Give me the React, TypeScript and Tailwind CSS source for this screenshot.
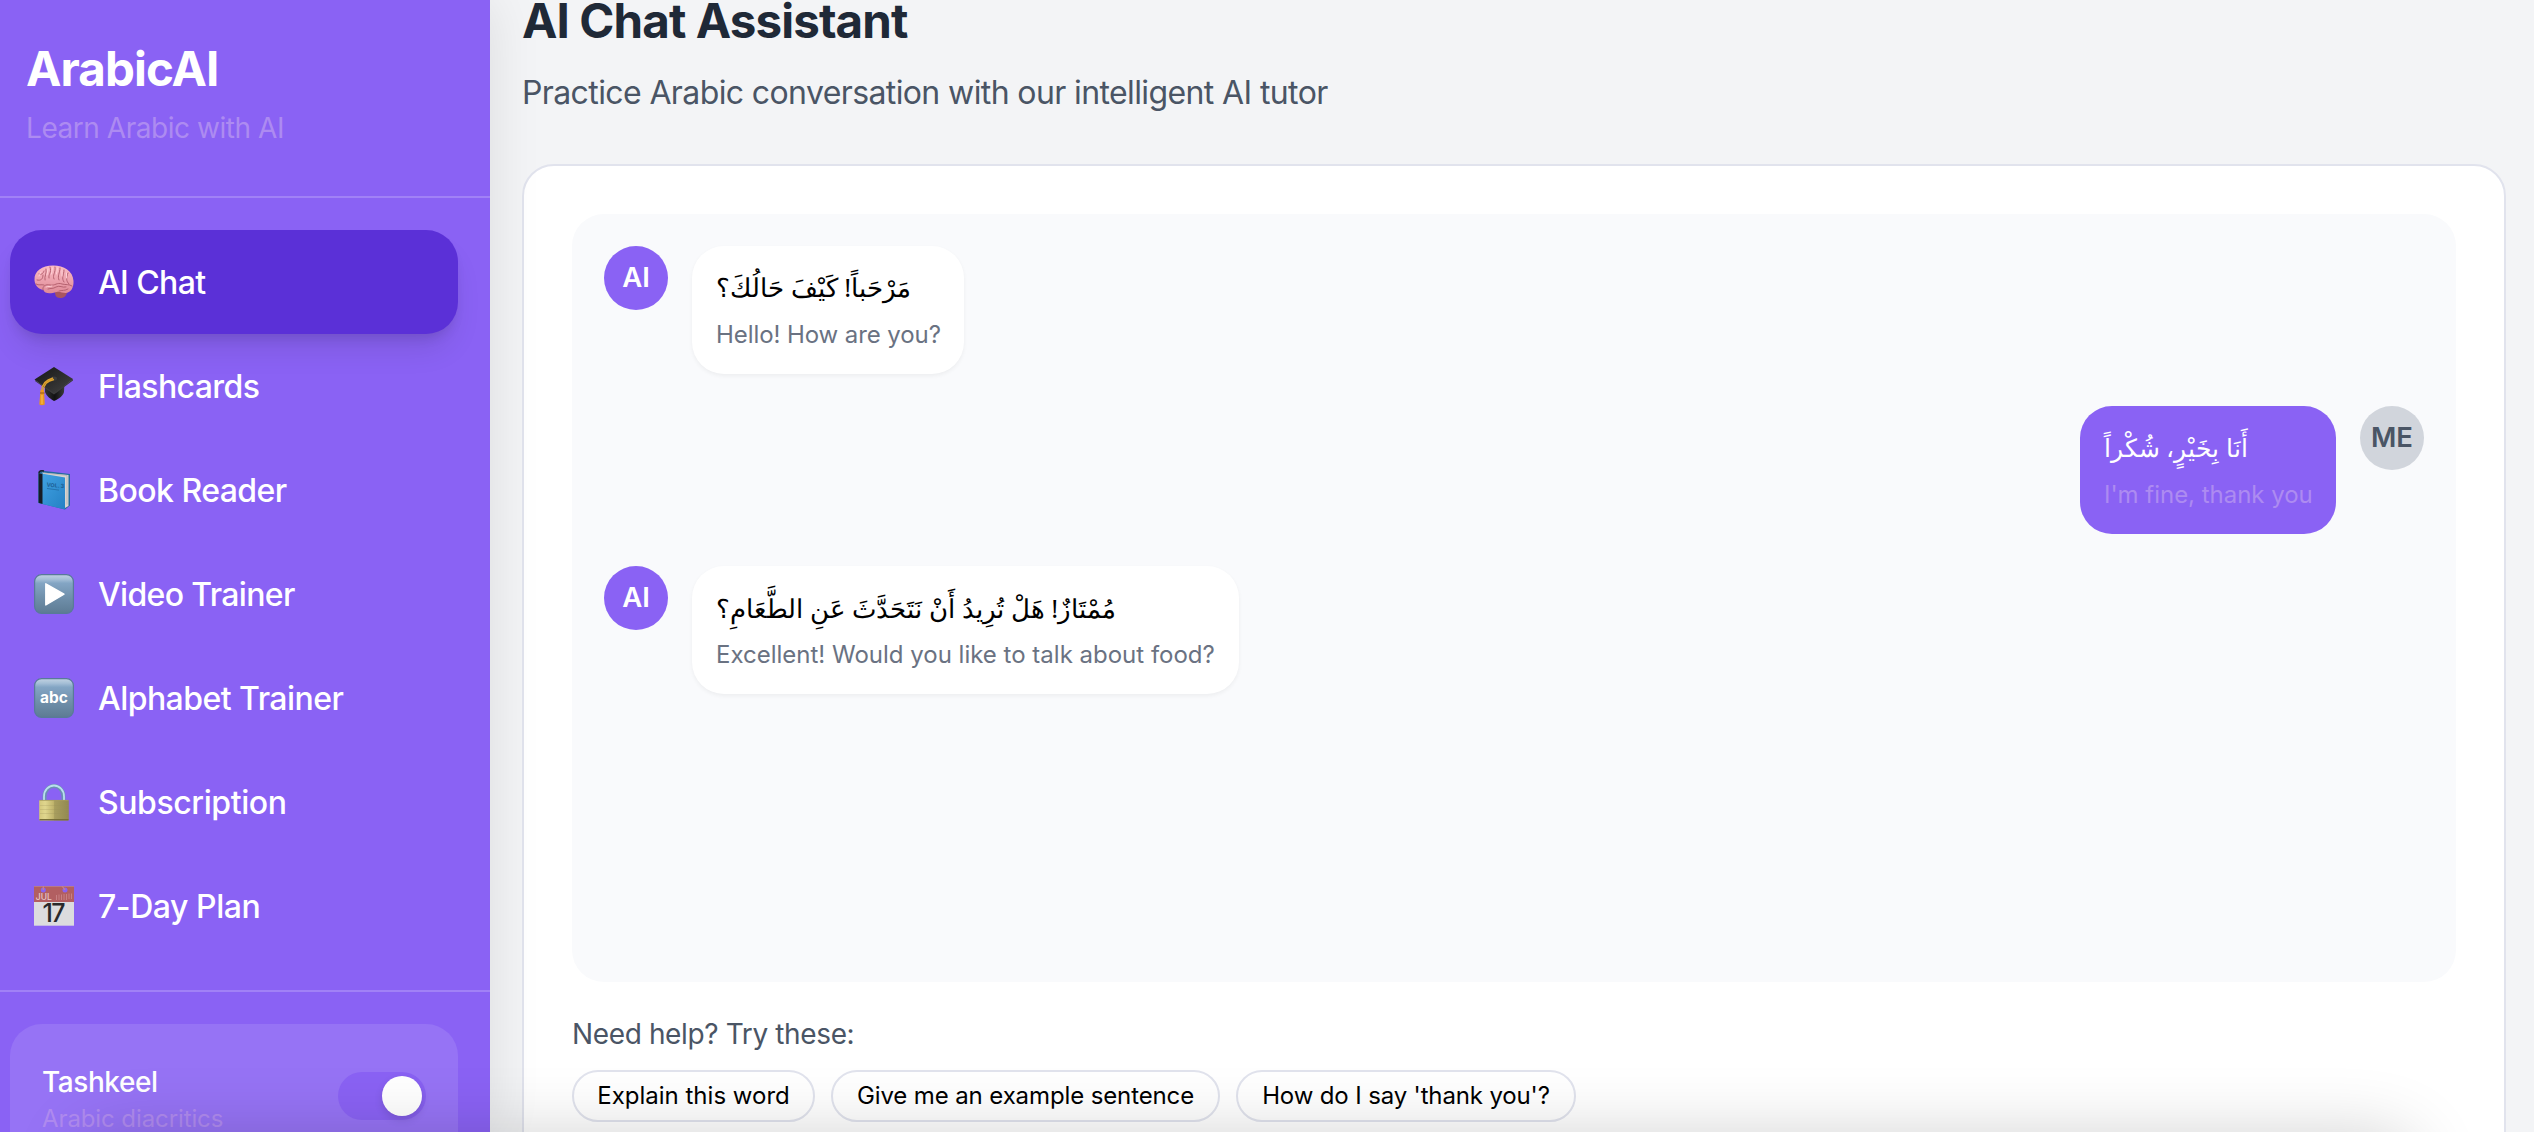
import React from "react";

function BrainIcon() {
  return (
    <svg viewBox="0 0 40 40" className="h-10 w-10 shrink-0">
      <defs>
        <linearGradient id="brain" x1="0" y1="0" x2="0" y2="1">
          <stop offset="0" stopColor="#fbbcc5" />
          <stop offset="1" stopColor="#df8a97" />
        </linearGradient>
      </defs>
      <path d="M21 30c0-3 3-5 8-5s5 3 4 6-3 5-7 5-5-3-5-6z" fill="#a85560" />
      <path d="M0.5 18C0 9 8 3.500 19 3.500c11 0 20 5.500 20.500 15.500 .4 7-3 12-8 12-3 0-6-2-9-1-6 2-12 2-13-2C4 27 .700 23 .500 18z" fill="url(#brain)" />
      <g fill="none" stroke="#b5616f" strokeWidth="1" strokeLinecap="round">
        <path d="M3 18c4 1 6-1 6-5M5 12c2 1 4 0 5-3M11 18c-1-4 2-6 1-11M15 16c-1-4 3-5 1-11M20 17c-2-4 2-6 1-12M25 18c-2-4 1-7 1-12M30 20c-3-4 0-7 0-12M35 22c-3-3-3-6-1-11" />
        <path d="M9 28c-1-4 3-6 7-5 5 1 7-3 12-1 4 1 7 0 10 2M14 27c3-1 5 0 8-2 4-2 6 1 10 0M2 22c3 2 5 0 8 1M25 29c3-1 6 0 9-2" />
      </g>
      <g fill="none" stroke="#ffd3d8" strokeWidth="0.900" strokeLinecap="round">
        <path d="M7 10l-2 4M14 7l-1 6M18.500 6l-1 6M23.500 6l-1 6M28 8v6M32.500 11v5M12 25c2-1 4 0 6-1" />
      </g>
    </svg>
  );
}

function CapIcon() {
  return (
    <svg viewBox="0 0 40 40" className="h-10 w-10 shrink-0">
      <defs>
        <linearGradient id="board" x1="0" y1="0" x2="1" y2="1">
          <stop offset="0" stopColor="#151515" />
          <stop offset="1" stopColor="#444" />
        </linearGradient>
        <linearGradient id="capBase" x1="0" y1="0" x2="1" y2="0">
          <stop offset="0" stopColor="#333" />
          <stop offset="0.500" stopColor="#111" />
          <stop offset="1" stopColor="#3a3a3a" />
        </linearGradient>
      </defs>
      <path d="M11 18v8c2 5 6 7 9 9 5-2 9-5 10-9l.500-10z" fill="url(#capBase)" />
      <path d="M0.500 13.500 20 1l19 12-19 15z" fill="url(#board)" />
      <path d="M1 14l19 13 19-14v1.500L20 28.500 1 15z" fill="#3b3b3b" />
      <ellipse cx="20" cy="12.500" rx="3" ry="2" fill="#3c3c3c" />
      <path d="M19 12C11 14 8 18 7.500 25M20 13.500C13 15 10 18 9 25" fill="none" stroke="#dda12c" strokeWidth="1.300" />
      <path d="M6.500 24h3.500l.800 14.500c-2 1-4 1-5.500 0z" fill="#e9981e" />
      <path d="M6 27h4.500" stroke="#a8651d" strokeWidth="1.300" />
      <path d="M8 29v9" stroke="#ffc65b" strokeWidth="0.900" />
    </svg>
  );
}

function BookIcon() {
  return (
    <svg viewBox="0 0 40 40" className="h-10 w-10 shrink-0">
      <defs>
        <linearGradient id="cover" x1="0" y1="0" x2="1" y2="1">
          <stop offset="0" stopColor="#43a5e5" />
          <stop offset="1" stopColor="#2480c4" />
        </linearGradient>
      </defs>
      <path d="M7 .500 36 4v31.500L31 39.500 4.500 33V3z" fill="#236b9f" />
      <path d="M8 2.500 34.500 5v31L31 38z" fill="#d8d4d0" />
      <path d="M10 3 33 5.500v29" fill="none" stroke="#a9aaa8" strokeWidth="0.600" />
      <path d="M4.500 3 31 7.500v32L4.500 33z" fill="url(#cover)" />
      <path d="M4.500 3 8.500 4v30l-4-1.300z" fill="#171c26" />
      <path d="M5 3c0-2 2-2.500 5-2" fill="none" stroke="#1b202b" strokeWidth="1.500" />
      <text x="12.500" y="16.500" transform="rotate(5 12 16)" className="font-[Inter] text-[5.500px] font-bold" fill="#1d5f94">VOL. 3</text>
      <path d="M13 18.500l12 1.600" stroke="#2473ad" strokeWidth="1" />
    </svg>
  );
}

function Tile({ id, children }: { id: string; children: React.ReactNode }) {
  return (
    <svg viewBox="0 0 40 40" className="h-10 w-10 shrink-0">
      <defs>
        <linearGradient id={id} x1="0" y1="0" x2="0" y2="1">
          <stop offset="0" stopColor="#c2d3e2" />
          <stop offset="0.120" stopColor="#a5bfd6" />
          <stop offset="0.220" stopColor="#83a5c4" />
          <stop offset="0.600" stopColor="#6f8faa" />
          <stop offset="1" stopColor="#5d7b93" />
        </linearGradient>
      </defs>
      <rect x="0.600" y="0.600" width="38.800" height="38.800" rx="7" fill={`url(#${id})`} stroke="#587a99" strokeWidth="1.200" />
      {children}
    </svg>
  );
}

function PlayIcon() {
  return (
    <Tile id="playTile">
      <path d="M11.800 9.800 30 20.200 11.800 31z" fill="#fff" stroke="#fff" strokeWidth="1.400" strokeLinejoin="round" />
    </Tile>
  );
}

function AbcIcon() {
  return (
    <Tile id="abcTile">
      <text x="20" y="24.800" textAnchor="middle" className="font-[Inter] text-[15.500px] font-bold" fill="#fff">abc</text>
    </Tile>
  );
}

function LockIcon() {
  return (
    <svg viewBox="0 0 40 40" className="h-10 w-10 shrink-0">
      <defs>
        <linearGradient id="brass" x1="0" y1="0" x2="1" y2="0">
          <stop offset="0" stopColor="#d3c77c" />
          <stop offset="0.200" stopColor="#e0d68e" />
          <stop offset="0.480" stopColor="#c0b46c" />
          <stop offset="0.520" stopColor="#a89e5e" />
          <stop offset="1" stopColor="#928951" />
        </linearGradient>
      </defs>
      <path d="M10.500 20v-5.500a9.500 10.500 0 0 1 19 0V20" fill="none" stroke="#6c8fb4" strokeWidth="4" />
      <path d="M10 20v-5.500a10 11 0 0 1 20 0V20" fill="none" stroke="#b9dfee" strokeWidth="1.800" />
      <rect x="5.200" y="18" width="29.600" height="20.500" rx="1" fill="url(#brass)" />
      <path d="M6 23.500h28M6 27.500h28M6 31.500h28" stroke="#9c925a" strokeOpacity="0.350" strokeWidth="0.700" />
      <path d="M5.500 37.700h29" stroke="#776e38" strokeWidth="1.400" />
      <path d="M5.500 18.400h29" stroke="#a79c60" strokeWidth="0.800" />
    </svg>
  );
}

function CalendarIcon() {
  return (
    <svg viewBox="0 0 40 40" className="h-10 w-10 shrink-0">
      <rect y="0.300" width="40" height="39.400" fill="#dcdcde" />
      <rect y="0.300" width="40" height="15.700" fill="#b25f61" />
      <circle cx="9.300" cy="4" r="2.500" fill="#8a62f3" />
      <circle cx="31" cy="4" r="2.500" fill="#8a62f3" />
      <path d="M9.300 0v4M28 0l3 4" stroke="#c98486" strokeWidth="1.200" />
      <text x="1.800" y="13.600" className="font-[Inter] text-[8.500px] font-medium" fill="#e8c9c9">JUL</text>
      <path d="M22.500 9v5M25 8.500V14M27.500 8.500V14M30 8V14M32.500 8V14M35 7.500V13M37.500 7.500V13" stroke="#c98587" strokeWidth="0.900" />
      <text x="19.300" y="36" textAnchor="middle" className="font-[Inter] text-[25px] font-medium tracking-[-1.500px]" fill="#29292b">17</text>
    </svg>
  );
}

const navItems = [
  { label: "AI Chat", Icon: BrainIcon, tracking: "tracking-[-0.6px]", active: true },
  { label: "Flashcards", Icon: CapIcon, tracking: "tracking-[-0.6px]" },
  { label: "Book Reader", Icon: BookIcon, tracking: "tracking-[-0.54px]" },
  { label: "Video Trainer", Icon: PlayIcon, tracking: "tracking-[-0.65px]" },
  { label: "Alphabet Trainer", Icon: AbcIcon, tracking: "tracking-[-0.54px]" },
  { label: "Subscription", Icon: LockIcon, tracking: "tracking-[-0.42px]" },
  { label: "7-Day Plan", Icon: CalendarIcon, tracking: "tracking-[-0.45px]" },
];

function Sidebar() {
  return (
    <aside className="relative z-10 h-full w-[490px] shrink-0 bg-[#8a62f4] text-white shadow-[0_0_50px_rgba(0,0,0,0.1)]">
      <header className="h-[198px] border-b-2 border-[#a181f6] pt-[41px] pl-[26px]">
        <h1 className="text-[47.5px] leading-[56px] font-bold tracking-[-0.9px]">ArabicAI</h1>
        <p className="mt-[11px] text-[28px] leading-10 tracking-[-0.45px] text-[#ad8bf1]">Learn Arabic with AI</p>
      </header>
      <nav className="border-b-2 border-[#a181f6] py-8 pr-8 pl-[10px]">
        {navItems.map(({ label, Icon, tracking, active }) => (
          <a
            key={label}
            className={`flex h-[104px] items-center gap-6 rounded-[32px] pl-6 ${active ? "bg-[#5b30d7] shadow-[0_20px_30px_-6px_rgba(0,0,0,0.1),0_8px_12px_-4px_rgba(0,0,0,0.1)]" : ""}`}
          >
            <Icon />
            <span className={`pt-0.5 text-[32px] font-medium ${tracking}`}>{label}</span>
          </a>
        ))}
      </nav>
      <div className="mt-8 mr-8 ml-[10px] flex h-[180px] items-start justify-between rounded-[32px] bg-[#9673f5] px-8">
        <div className="pt-[38px]">
          <p className="text-[28px] leading-10 font-medium tracking-[-0.42px]">Tashkeel</p>
          <p className="mt-px text-2xl leading-8 tracking-[-0.1px] text-[#b08bf0]">Arabic diacritics</p>
        </div>
        <div className="mt-12 flex h-12 w-[88px] items-center justify-end rounded-full bg-[#8a62f4] p-1">
          <span className="h-10 w-10 rounded-full bg-white shadow-[0_4px_8px_rgba(0,0,0,0.12)]" />
        </div>
      </div>
    </aside>
  );
}

type Message = { me?: boolean; arabic: string; english: string; width: string; arabicSize: string; tracking: string };

const messages: Message[] = [
  { arabic: "مَرْحَباً! كَيْفَ حَالُكَ؟", english: "Hello! How are you?", width: "w-[272px]", arabicSize: "text-[25.7px]", tracking: "tracking-[-0.08px]" },
  { me: true, arabic: "أَنَا بِخَيْرٍ، شُكْراً", english: "I'm fine, thank you", width: "w-[256px]", arabicSize: "text-[24.7px]", tracking: "tracking-[-0.02px]" },
  { arabic: "مُمْتَازٌ! هَلْ تُرِيدُ أَنْ نَتَحَدَّثَ عَنِ الطَّعَامِ؟", english: "Excellent! Would you like to talk about food?", width: "w-[547px]", arabicSize: "text-[25.8px]", tracking: "tracking-normal" },
];

function Bubble({ me, arabic, english, width, arabicSize, tracking }: Message) {
  return (
    <div className={`flex items-start gap-6 ${me ? "flex-row-reverse" : ""}`}>
      <div className={`flex h-16 w-16 shrink-0 items-center justify-center rounded-full text-[27.5px] font-semibold ${me ? "bg-[#d1d5dc] text-[#4a5565]" : "bg-[#8a62f4] text-white"}`}>
        {me ? "ME" : "AI"}
      </div>
      <div className={`h-32 rounded-[32px] px-6 pt-6 whitespace-nowrap ${width} ${me ? "bg-[#8a62f4] text-white" : "bg-white text-black shadow-[0_2px_4px_rgba(0,0,0,0.05)]"}`}>
        <p className={`h-12 font-['Noto_Sans',sans-serif] leading-9 ${arabicSize}`}>{arabic}</p>
        <p className={`text-2xl leading-[33px] ${tracking} ${me ? "text-[#ad8bf1]" : "text-[#6a7282]"}`}>{english}</p>
      </div>
    </div>
  );
}

const suggestions = [
  { text: "Explain this word", style: "w-[243px] tracking-normal" },
  { text: "Give me an example sentence", style: "w-[389px] tracking-[-0.115px]" },
  { text: "How do I say 'thank you'?", style: "w-[340px] tracking-[-0.14px]" },
];

export default function App() {
  return (
    <div className="relative flex h-[1132px] w-[2534px] overflow-hidden bg-[#f3f4f6] font-[Inter,sans-serif]">
      <Sidebar />
      <main className="flex-1 pr-7 pl-8">
        <h2 className="-mt-[7px] text-[47.5px] leading-[56px] font-bold tracking-[-0.9px] text-[#1f2937]">AI Chat Assistant</h2>
        <p className="mt-5 text-[32px] leading-[48px] tracking-[-0.61px] text-[#4a5565]">
          Practice Arabic conversation with our intelligent AI tutor
        </p>
        <section className="mt-[47px] h-[1100px] rounded-[32px] border-2 border-[#e1e3ed] bg-white p-12">
          <div className="flex h-[768px] flex-col gap-8 rounded-[32px] bg-[#f9fafc] p-8">
            {messages.map((message) => (
              <Bubble key={message.english} {...message} />
            ))}
          </div>
          <p className="mt-8 text-[28px] leading-10 tracking-[-0.37px] text-[#4a5565]">Need help? Try these:</p>
          <div className="mt-4 flex gap-4">
            {suggestions.map(({ text, style }) => (
              <button key={text} className={`h-[52px] rounded-full border-2 border-[#e1e3ed] text-2xl whitespace-nowrap text-black ${style}`}>
                {text}
              </button>
            ))}
          </div>
        </section>
      </main>
      <div className="pointer-events-none absolute top-[1136px] right-[120px] left-[80px] z-20 h-24 rounded-[32px] shadow-[0_0_70px_rgba(0,0,0,0.19)]" />
    </div>
  );
}
